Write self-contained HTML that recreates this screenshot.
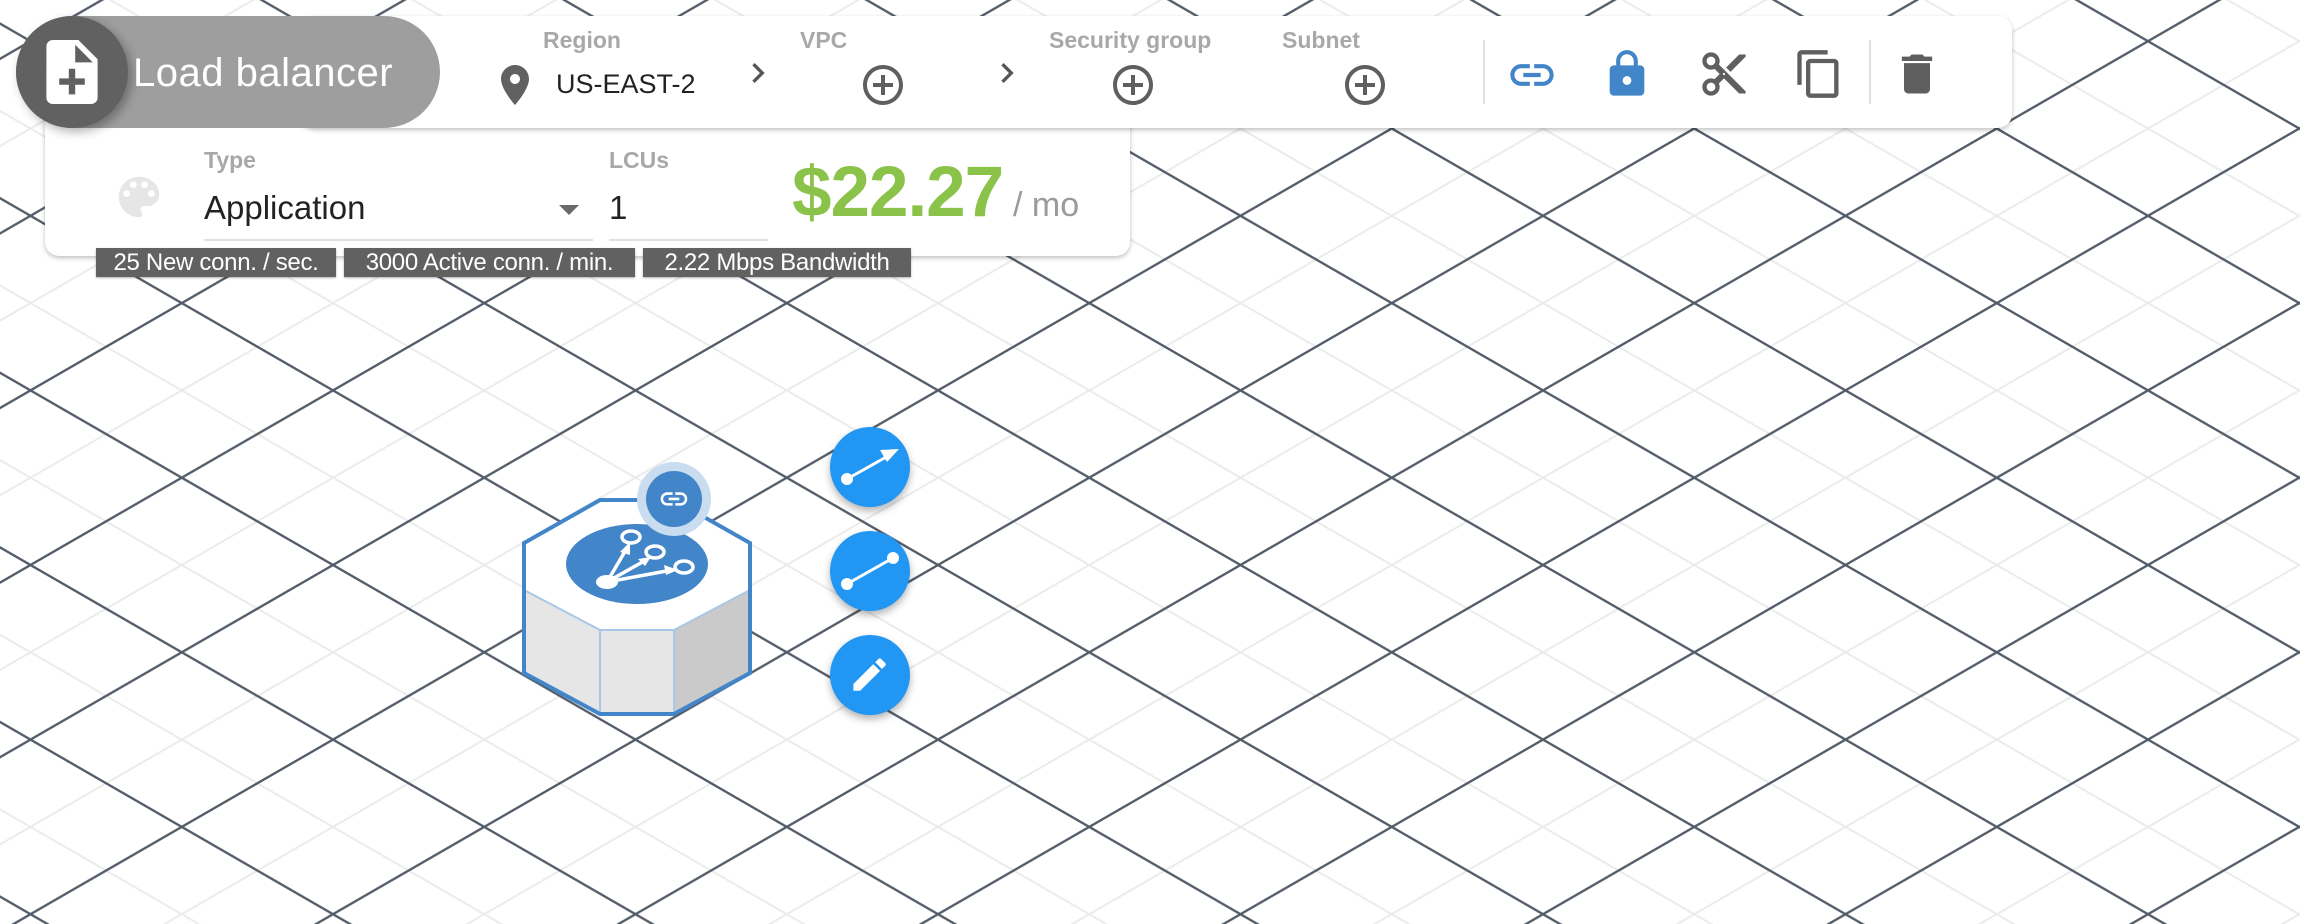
<!DOCTYPE html>
<html><head><meta charset="utf-8">
<style>
*{margin:0;padding:0;box-sizing:border-box}
html,body{width:2300px;height:924px;overflow:hidden;background:#fff;font-family:"Liberation Sans",sans-serif}
.abs{position:absolute}
.lbl{position:absolute;color:#a8a8a8;font-weight:bold;font-size:23px}
.chip{position:absolute;top:248px;height:29px;background:#616161;color:#fff;font-size:24px;line-height:29px;text-align:center;box-shadow:0 1px 2px rgba(0,0,0,.3);white-space:nowrap;letter-spacing:-0.3px}
.fab{position:absolute;width:80px;height:80px;border-radius:50%;background:#2196f3;box-shadow:0 4px 8px rgba(0,0,0,.3)}
</style></head><body>
<svg class="abs" style="left:0;top:0" width="2300" height="924">
<defs>
<pattern id="lg" patternUnits="userSpaceOnUse" x="30.5" y="41.2" width="151.25" height="87.3">
<path d="M0 0L151.25 87.3M151.25 0L0 87.3" stroke="#ebebeb" stroke-width="2"/>
</pattern>
<pattern id="dg" patternUnits="userSpaceOnUse" x="30.5" y="41.2" width="302.5" height="174.6">
<path d="M0 0L302.5 174.6M302.5 0L0 174.6" stroke="#525c68" stroke-width="2.3"/>
</pattern>
</defs>
<rect width="2300" height="924" fill="url(#lg)"/>
<rect width="2300" height="924" fill="url(#dg)"/>
</svg>

<!-- second card -->
<div class="abs" style="left:45px;top:110px;width:1085px;height:146px;background:#fff;border-radius:14px;box-shadow:0 2px 5px rgba(0,0,0,.25)"></div>
<svg class="abs" style="left:112px;top:170px" width="54" height="54" viewBox="0 0 24 24"><path fill="#e6e6e6" d="M12 3c-4.970 0-9 4.03-9 9s4.03 9 9 9c.83 0 1.5-.67 1.5-1.5 0-.39-.15-.74-.39-1.01-.23-.26-.38-.61-.38-.99 0-.83.67-1.5 1.5-1.5H16c2.76 0 5-2.24 5-5 0-4.42-4.03-8-9-8zm-5.5 9c-.83 0-1.5-.67-1.5-1.5S5.67 9 6.5 9 8 9.67 8 10.5 7.33 12 6.5 12zm3-4C8.67 8 8 7.33 8 6.5S8.67 5 9.5 5s1.5.67 1.5 1.5S10.33 8 9.5 8zm5 0c-.83 0-1.5-.67-1.5-1.5S13.67 5 14.5 5s1.5.67 1.5 1.5S15.33 8 14.5 8zm3 4c-.83 0-1.5-.67-1.5-1.5S16.67 9 17.5 9s1.5.67 1.5 1.5-.67 1.5-1.5 1.5z"/></svg>
<div class="lbl" style="left:204px;top:147px">Type</div>
<div class="abs" style="left:204px;top:189px;font-size:33px;color:#222">Application</div>
<div class="abs" style="left:559px;top:205px;width:0;height:0;border-left:10px solid transparent;border-right:10px solid transparent;border-top:10px solid #6a6a6a"></div>
<div class="abs" style="left:204px;top:239px;width:389px;height:2px;background:#e0e0e0"></div>
<div class="lbl" style="left:609px;top:147px">LCUs</div>
<div class="abs" style="left:609px;top:189px;font-size:33px;color:#222">1</div>
<div class="abs" style="left:609px;top:239px;width:159px;height:2px;background:#e0e0e0"></div>
<div class="abs" style="left:792px;top:152px;font-size:71px;font-weight:bold;color:#8bc34a;letter-spacing:-1px">$22.27</div>
<div class="abs" style="left:1013px;top:186px;font-size:34px;color:#9a9a9a">/ mo</div>
<div class="chip" style="left:96px;width:240px">25 New conn. / sec.</div>
<div class="chip" style="left:344px;width:291px">3000 Active conn. / min.</div>
<div class="chip" style="left:643px;width:268px">2.22 Mbps Bandwidth</div>

<!-- top card -->
<div class="abs" style="left:300px;top:16px;width:1712px;height:112px;background:#fff;border-radius:14px;box-shadow:0 2px 5px rgba(0,0,0,.25)"></div>
<div class="lbl" style="left:543px;top:27px">Region</div>
<div class="lbl" style="left:800px;top:27px">VPC</div>
<div class="lbl" style="left:1049px;top:27px">Security group</div>
<div class="lbl" style="left:1282px;top:27px">Subnet</div>
<svg class="abs" style="left:491px;top:61px" width="48" height="48" viewBox="0 0 24 24"><path fill="#616161" d="M12 2C8.13 2 5 5.13 5 9c0 5.25 7 13 7 13s7-7.75 7-13c0-3.87-3.13-7-7-7zm0 9.5c-1.38 0-2.5-1.12-2.5-2.5s1.12-2.5 2.5-2.5 2.5 1.12 2.5 2.5-1.12 2.5-2.5 2.5z"/></svg>
<div class="abs" style="left:556px;top:69px;font-size:27px;color:#222">US-EAST-2</div>
<svg class="abs" style="left:738px;top:53px" width="40" height="40" viewBox="0 0 24 24"><path fill="#555" d="M10 6L8.59 7.41 13.17 12l-4.58 4.59L10 18l6-6z"/></svg>
<svg class="abs" style="left:987px;top:53px" width="40" height="40" viewBox="0 0 24 24"><path fill="#555" d="M10 6L8.59 7.41 13.17 12l-4.58 4.59L10 18l6-6z"/></svg>
<svg class="abs" style="left:859px;top:61px" width="48" height="48" viewBox="0 0 24 24"><path fill="#5f5f5f" d="M13 7h-2v4H7v2h4v4h2v-4h4v-2h-4V7zm-1-5C6.48 2 2 6.48 2 12s4.48 10 10 10 10-4.48 10-10S17.52 2 12 2zm0 18c-4.41 0-8-3.59-8-8s3.59-8 8-8 8 3.590 8 8-3.59 8-8 8z"/></svg>
<svg class="abs" style="left:1109px;top:61px" width="48" height="48" viewBox="0 0 24 24"><path fill="#5f5f5f" d="M13 7h-2v4H7v2h4v4h2v-4h4v-2h-4V7zm-1-5C6.48 2 2 6.48 2 12s4.48 10 10 10 10-4.48 10-10S17.52 2 12 2zm0 18c-4.41 0-8-3.59-8-8s3.59-8 8-8 8 3.59 8 8-3.59 8-8 8z"/></svg>
<svg class="abs" style="left:1341px;top:61px" width="48" height="48" viewBox="0 0 24 24"><path fill="#5f5f5f" d="M13 7h-2v4H7v2h4v4h2v-4h4v-2h-4V7zm-1-5C6.48 2 2 6.48 2 12s4.48 10 10 10 10-4.48 10-10S17.52 2 12 2zm0 18c-4.41 0-8-3.59-8-8s3.59-8 8-8 8 3.59 8 8-3.59 8-8 8z"/></svg>
<div class="abs" style="left:1483px;top:40px;width:2px;height:64px;background:#e0e0e0"></div>
<div class="abs" style="left:1869px;top:40px;width:2px;height:64px;background:#e0e0e0"></div>
<svg class="abs" style="left:1506px;top:49px" width="52" height="52" viewBox="0 0 24 24"><path fill="#4285c8" d="M3.9 12c0-1.71 1.39-3.1 3.1-3.1h4V7H7c-2.76 0-5 2.24-5 5s2.24 5 5 5h4v-1.9H7c-1.71 0-3.1-1.39-3.1-3.1zM8 13h8v-2H8v2zm9-6h-4v1.9h4c1.71 0 3.1 1.39 3.1 3.1s-1.39 3.1-3.1 3.1h-4V17h4c2.76 0 5-2.24 5-5s-2.24-5-5-5z"/></svg>
<svg class="abs" style="left:1601px;top:48px" width="52" height="52" viewBox="0 0 24 24"><path fill="#4285c8" d="M18 8h-1V6c0-2.76-2.24-5-5-5S7 3.24 7 6v2H6c-1.1 0-2 .9-2 2v10c0 1.1.9 2 2 2h12c1.1 0 2-.9 2-2V10c0-1.1-.9-2-2-2zm-6 9c-1.1 0-2-.9-2-2s.9-2 2-2 2 .9 2 2-.9 2-2 2zm3.1-9H8.9V6c0-1.71 1.39-3.1 3.1-3.1 1.71 0 3.1 1.39 3.1 3.1v2z"/></svg>
<svg class="abs" style="left:1698px;top:48px" width="52" height="52" viewBox="0 0 24 24"><path fill="#5f5f5f" d="M9.64 7.64c.23-.5.36-1.05.36-1.64 0-2.21-1.79-4-4-4S2 3.79 2 6s1.79 4 4 4c.59 0 1.14-.13 1.64-.36L10 12l-2.36 2.36C7.14 14.13 6.59 14 6 14c-2.21 0-4 1.79-4 4s1.79 4 4 4 4-1.79 4-4c0-.59-.13-1.14-.36-1.64L12 14l7 7h3v-1L9.64 7.64zM6 8c-1.1 0-2-.89-2-2s.9-2 2-2 2 .89 2 2-.9 2-2 2zm0 12c-1.1 0-2-.89-2-2s.9-2 2-2 2 .89 2 2-.9 2-2 2zm6-7.5c-.28 0-.5-.22-.5-.5s.22-.5.5-.5.5.22.5.5-.22.5-.5.5zM19 3l-6 6 2 2 7-7V3z"/></svg>
<svg class="abs" style="left:1793px;top:48px" width="52" height="52" viewBox="0 0 24 24"><path fill="#5f5f5f" d="M16 1H4c-1.1 0-2 .9-2 2v14h2V3h12V1zm3 4H8c-1.1 0-2 .9-2 2v14c0 1.1.9 2 2 2h11c1.1 0 2-.9 2-2V7c0-1.1-.9-2-2-2zm0 16H8V7h11v14z"/></svg>
<svg class="abs" style="left:1891px;top:48px" width="52" height="52" viewBox="0 0 24 24"><path fill="#5f5f5f" d="M6 19c0 1.1.9 2 2 2h8c1.1 0 2-.9 2-2V7H6v12zM19 4h-3.5l-1-1h-5l-1 1H5v2h14V4z"/></svg>

<!-- pill -->
<div class="abs" style="left:16px;top:16px;width:424px;height:112px;border-radius:56px;background:#9e9e9e"></div>
<div class="abs" style="left:16px;top:16px;width:112px;height:112px;border-radius:56px;background:#616161;box-shadow:4px 4px 10px rgba(0,0,0,.3)"></div>
<svg class="abs" style="left:36px;top:40px" width="72" height="64" viewBox="4 2 16 20" preserveAspectRatio="xMidYMid meet"><path fill="#fff" d="M14 2H6c-1.1 0-1.99.9-1.99 2L4 20c0 1.1.89 2 1.99 2H18c1.1 0 2-.9 2-2V8l-6-6zm2 14h-3v3h-2v-3H8v-2h3v-3h2v3h3v2zm-3-7V3.5L18.5 9H13z"/></svg>
<div class="abs" style="left:133px;top:51px;font-size:40px;color:#fff;letter-spacing:0.5px">Load balancer</div>

<!-- node -->
<svg class="abs" style="left:0;top:0" width="960" height="760">
<polygon points="524,590 600,630 600,714 524,673" fill="#e6e6e6"/>
<polygon points="600,630 674,630 674,714 600,714" fill="#e6e6e6"/>
<polygon points="674,630 750,590 750,673 674,714" fill="#cacaca"/>
<polygon points="600,500 674,500 750,543 750,590 674,630 600,630 524,590 524,543" fill="#fff"/>
<polyline points="524,590 600,630 674,630 750,590" fill="none" stroke="#a9c7e6" stroke-width="2"/>
<line x1="600" y1="630" x2="600" y2="714" stroke="#a9c7e6" stroke-width="2"/>
<line x1="674" y1="630" x2="674" y2="714" stroke="#a9c7e6" stroke-width="2"/>
<polygon points="600,500 674,500 750,543 750,673 674,714 600,714 524,673 524,543" fill="none" stroke="#4285c8" stroke-width="4"/>
<ellipse cx="637" cy="564" rx="71" ry="40" fill="#4285c8"/>
<g stroke="#fff" stroke-width="3.5" fill="none">
<line x1="607" y1="582" x2="627" y2="548"/>
<line x1="607" y1="582" x2="646" y2="560"/>
<line x1="607" y1="582" x2="672" y2="570"/>
<ellipse cx="631" cy="537" rx="9" ry="6"/>
<ellipse cx="655" cy="552" rx="9" ry="6"/>
<ellipse cx="684" cy="567" rx="9" ry="6"/>
</g>
<g fill="#fff">
<ellipse cx="607" cy="582" rx="11" ry="7"/>
<polygon points="630,542 620,552 630,555"/>
<polygon points="651,557 638,559 645,566"/>
<polygon points="678,570 664,565 666,575"/>
</g>
<circle cx="674" cy="499" r="37" fill="#c9dcf0"/>
<circle cx="674" cy="499" r="28" fill="#4285c8"/>
<g transform="translate(658,483) scale(1.33)"><path fill="#fff" d="M3.9 12c0-1.71 1.39-3.1 3.1-3.1h4V7H7c-2.76 0-5 2.24-5 5s2.24 5 5 5h4v-1.9H7c-1.71 0-3.1-1.39-3.1-3.1zM8 13h8v-2H8v2zm9-6h-4v1.9h4c1.71 0 3.1 1.39 3.1 3.1s-1.39 3.1-3.1 3.1h-4V17h4c2.76 0 5-2.24 5-5s-2.24-5-5-5z"/></g>
</svg>

<div class="fab" style="left:830px;top:427px"></div>
<div class="fab" style="left:830px;top:531px"></div>
<div class="fab" style="left:830px;top:635px"></div>
<svg class="abs" style="left:0;top:0" width="960" height="760">
<g stroke="#fff" stroke-width="3" fill="#fff">
<line x1="847" y1="479" x2="888" y2="456"/>
<circle cx="847" cy="479" r="6" stroke="none"/>
<polygon points="899,449 880,450 887,462" stroke="none"/>
<line x1="847" y1="584" x2="893" y2="558"/>
<circle cx="847" cy="584" r="6" stroke="none"/>
<circle cx="893" cy="558" r="6" stroke="none"/>
</g>
<g transform="translate(848,653) scale(1.8)"><path fill="#fff" d="M3 17.25V21h3.75L17.81 9.94l-3.75-3.75L3 17.25zM20.71 7.04c.39-.39.39-1.02 0-1.41l-2.34-2.34c-.39-.39-1.02-.39-1.41 0l-1.83 1.83 3.75 3.75 1.83-1.83z"/></g>
</svg>
</body></html>
